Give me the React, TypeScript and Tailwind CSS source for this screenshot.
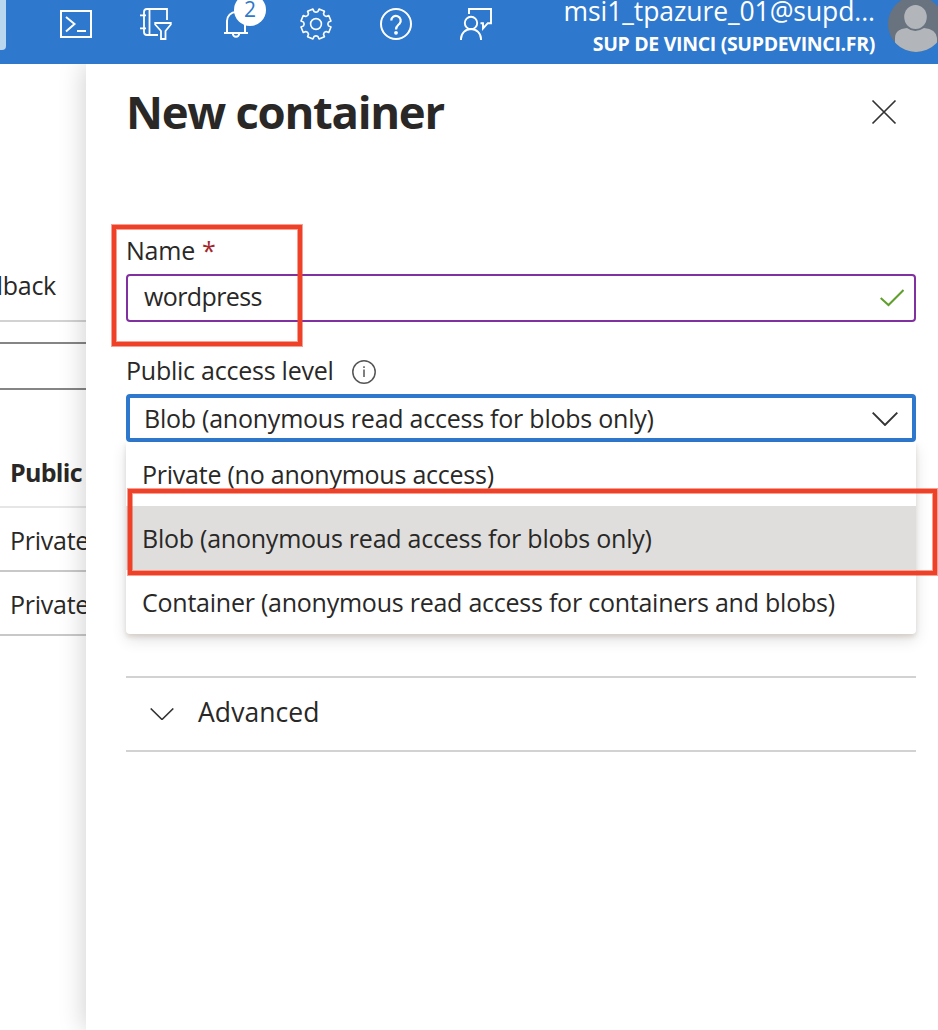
import type { ReactNode } from "react";

const FONT = "font-['Open_Sans','Noto_Sans',sans-serif]";

function gearPath() {
  const point = (deg: number, r: number) => {
    const a = (deg * Math.PI) / 180;
    return `${(16 + r * Math.sin(a)).toFixed(2)} ${(16 - r * Math.cos(a)).toFixed(2)}`;
  };
  let d = "";
  for (let k = 0; k < 8; k++) {
    const c = 22.5 + 45 * k;
    d += `${k === 0 ? "M" : "L"}${point(c - 14, 12.6)} L${point(c - 11, 15.3)} L${point(c + 11, 15.3)} L${point(c + 14, 12.6)} Q${point(c + 22.5, 11.2)} ${point(c + 31, 12.6)} `;
  }
  return d + "Z";
}

function Icon({ children, width = 1.8 }: { children: ReactNode; width?: number }) {
  return (
    <svg className="size-8 shrink-0 overflow-visible" viewBox="0 0 32 32" fill="none" stroke="#fff" strokeWidth={width}>
      {children}
    </svg>
  );
}

function TopBar() {
  return (
    <header className="flex h-16 shrink-0 bg-[#2e78cd] text-white">
      <div className="h-[50px] w-1.5 shrink-0 rounded-br bg-[#b9d8f0]" />
      <nav className="ml-[54px] mt-2 flex gap-12">
        <Icon width={2}>
          <path d="M1 3h30v26H1z" />
          <path d="M6 9l8.5 7L6 23.5M17 23h9" />
        </Icon>
        <Icon width={1.8}>
          <path d="M27 12V1H7Q4 1 4 4v20q0 3 3 3h11M9.5 1v26M0 7.3h6M0 20.3h6" />
          <path d="M15.2 15h15.6v1.5L25.5 23v8h-4.5v-8L15.2 16.5z" />
        </Icon>
        <div className="relative size-8">
          <Icon width={2}>
            <path d="M4 25h24M7 25V13a9 9 0 0 1 18 0v12M12.8 25.5a3.200 3.200 0 0 0 6.400 0" />
          </Icon>
          <span className="absolute -top-[14px] left-[14px] flex size-8 items-center justify-center rounded-full bg-white pb-px text-[21px] leading-none text-[#2e78cd]">
            2
          </span>
        </div>
        <Icon width={1.6}>
          <path d={gearPath()} strokeLinejoin="round" />
          <circle cx="16" cy="16" r="5.4" />
        </Icon>
        <Icon width={2}>
          <circle cx="16" cy="16" r="15" />
          <path d="M11.3 12.6a4.700 4.700 0 1 1 8.200 3.100C18 17.200 16 18.200 16 21.500" strokeWidth="2.2" />
          <circle cx="16" cy="24.8" r="1.9" fill="#fff" stroke="none" />
        </Icon>
        <Icon width={1.9}>
          <path d="M9 6V1h22v14.200h-3.200L23 20.500v-5.300h-2.500" />
          <circle cx="11" cy="15" r="6.2" />
          <path d="M1 32v-1a10 10 0 0 1 20 0v1" />
        </Icon>
      </nav>
      <div className="ml-auto mr-[13px] whitespace-nowrap text-right">
        <div className="-mt-[6px] h-[34px] text-[26.500px] leading-[34px] tracking-[-0.080px]">msi1_tpazure_01@supd...</div>
        <div className="pt-px text-[19.500px] font-bold leading-[30px] tracking-[-0.330px]">SUP DE VINCI (SUPDEVINCI.FR)</div>
      </div>
      <svg className="-mt-1 h-14 w-[50px] shrink-0" viewBox="0 0 50 56">
        <defs>
          <clipPath id="avatar">
            <circle cx="28" cy="28" r="28" />
          </clipPath>
        </defs>
        <g clipPath="url(#avatar)">
          <path fill="#68737f" d="M0 0h56v56H0z" />
          <ellipse cx="27.5" cy="21" rx="11.3" ry="12" fill="#b2b6bb" />
          <path fill="#b2b6bb" d="M7 56V42q0-9 12-10 8 6 17 0 12 1 13 10v14z" />
        </g>
      </svg>
    </header>
  );
}

function Background() {
  return (
    <div className="w-[86px] shrink-0 overflow-hidden whitespace-nowrap text-[25px] leading-8 tracking-[-0.250px]">
      <div className="flex h-[258px] items-end justify-end border-b-2 border-[#d2d2d2] pb-[19px] pr-[30px]">Feedback</div>
      <div className="mt-5 h-12 border-y-2 border-[#858585]" />
      <div className="flex h-[118px] items-end border-b-2 border-[#e6e6e6] pb-[18px] pl-2.5 font-bold tracking-[-0.700px]">Public</div>
      <div className="flex h-16 items-center border-b-2 border-[#c8c8c8] pl-2.5 pt-0.5">Private</div>
      <div className="flex h-16 items-center border-b-2 border-[#c8c8c8] pl-2.5 pt-0.5">Private</div>
    </div>
  );
}

function Option({ children, selected = false }: { children: ReactNode; selected?: boolean }) {
  return (
    <div className={selected ? "flex h-16 items-center bg-[#dfdedd] pl-4" : "flex h-16 items-center pl-4"}>
      <span>{children}</span>
    </div>
  );
}

function Panel() {
  return (
    <section className="relative z-10 flex-1 bg-white pl-10 pr-[22px] text-[25px] leading-8 tracking-[-0.240px] shadow-[-2px_0_24px_rgba(0,0,0,0.180)]">
      <div className="flex h-[170px] items-start justify-between pr-5 pt-5">
        <h1 className="text-[45.500px] font-bold leading-[54px] tracking-[-1.300px]">New container</h1>
        <svg className="mt-4 size-6 overflow-visible" viewBox="0 0 24 24" stroke="#333" strokeWidth="1.7">
          <path d="M.5.5l23 23M23.500.5l-23 23" />
        </svg>
      </div>
      <label className="flex h-10 items-start gap-[7px]">
        Name <span className="text-[#a4262c]">*</span>
      </label>
      <div className="flex h-12 items-center justify-between rounded border-2 border-[#8130a0] pl-4 pr-2.5">
        <span className="pb-1 tracking-[-0.600px]">wordpress</span>
        <svg className="h-[18px] w-6" viewBox="0 0 24 18" fill="none" stroke="#5fa02c" strokeWidth="2">
          <path d="M.7 9l7.800 7L23.500 1" />
        </svg>
      </div>
      <div className="flex h-[72px] items-start pt-8">
        <span>Public access level</span>
        <svg className="ml-[18px] mt-1.5 size-6" viewBox="0 0 24 24" fill="none" stroke="#555" strokeWidth="1.5">
          <circle cx="12" cy="12" r="11.2" />
          <path d="M12 9.500V17M12 6.200v1.800" />
        </svg>
      </div>
      <div className="relative">
        <div className="flex h-12 items-center justify-between rounded border-4 border-[#2e78cd] px-3.5">
          <span>Blob (anonymous read access for blobs only)</span>
          <svg className="mt-px h-[14px] w-[26px]" viewBox="0 0 26 14" fill="none" stroke="#333" strokeWidth="1.9">
            <path d="M.7.7L13 13 25.300.7" />
          </svg>
        </div>
        <div className="absolute inset-x-0 top-12 rounded-b bg-white shadow-[0_6px_15px_rgba(0,0,0,0.120),0_3px_4px_rgba(120,80,50,0.160)]">
          <Option>Private (no anonymous access)</Option>
          <Option selected>Blob (anonymous read access for blobs only)</Option>
          <Option>Container (anonymous read access for containers and blobs)</Option>
        </div>
      </div>
      <div className="mt-[234px] flex h-[76px] items-center border-y-2 border-[#d2d2d2] pl-6 text-[26.500px] tracking-[0.080px]">
        <svg className="mr-6 h-3 w-6" viewBox="0 0 24 12" fill="none" stroke="#333" strokeWidth="1.6">
          <path d="M.7.5L12 11.500 23.300.5" />
        </svg>
        <span className="pb-1">Advanced</span>
      </div>
    </section>
  );
}

export default function App() {
  return (
    <div className={`relative flex h-[1030px] w-[938px] flex-col overflow-hidden bg-white text-[#292827] ${FONT}`}>
      <TopBar />
      <main className="flex min-h-0 flex-1 overflow-hidden">
        <Background />
        <Panel />
      </main>
      <div className="absolute left-[111px] top-[224px] z-20 h-[123px] w-[192px] border border-[#ee4128]/50">
        <div className="size-full border-4 border-[#ee4128] outline outline-1 -outline-offset-[5px] outline-[#ee4128]/50" />
      </div>
      <div className="absolute left-[127px] top-[488px] z-20 h-[88px] w-[811px] border border-[#ee4128]/50">
        <div className="size-full border-4 border-[#ee4128] outline outline-1 -outline-offset-[5px] outline-[#ee4128]/50" />
      </div>
    </div>
  );
}
